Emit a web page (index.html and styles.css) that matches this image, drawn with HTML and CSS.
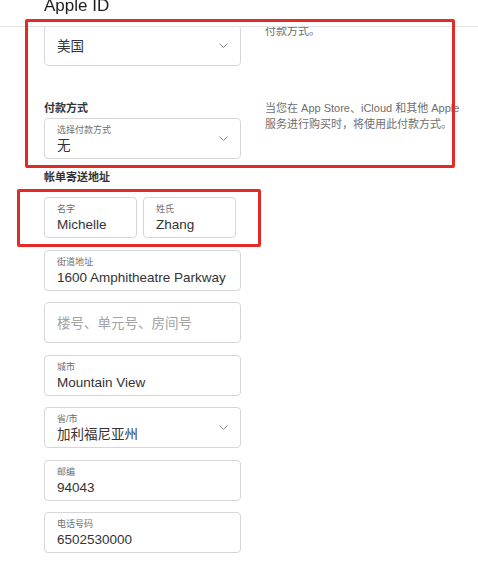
FILE: index.html
```
<!DOCTYPE html>
<html>
    <head>
        <meta charset="utf-8">
        <title>Apple ID</title>
        <meta name="viewport" content="width=device-width, initial-scale=1">
        <link rel="stylesheet" href="styles.css">
    </head>
    <body>
        <header class="topBar">
            <h1 class="title">Apple ID</h1>
        </header>

        <main class="page">
            <section class="row rowCountry">
                <div class="leftCol">
                    <div class="field">
                        <div class="fieldText">
                            <p class="fieldValue">美国</p>
                        </div>
                        <svg class="chevron" width="9" height="5" viewBox="0 0 9 5"><polyline points="0.5,0.5 4.5,4.5 8.5,0.5" /></svg>
                    </div>
                </div>
                <p class="hint">根据您所在的国家或地区，将显示不同的付款方式。</p>
            </section>

            <section class="row rowPay">
                <div class="leftCol">
                    <p class="groupLabel">付款方式</p>
                    <div class="field">
                        <div class="fieldText">
                            <p class="fieldLabel">选择付款方式</p>
                            <p class="fieldValue">无</p>
                        </div>
                        <svg class="chevron" width="9" height="5" viewBox="0 0 9 5"><polyline points="0.5,0.5 4.5,4.5 8.5,0.5" /></svg>
                    </div>
                </div>
                <p class="hint">当您在 App Store、iCloud 和其他 Apple 服务进行购买时，将使用此付款方式。</p>
            </section>

            <p class="groupLabel billingLabel">帐单寄送地址</p>
            <div class="fieldList">
                <div class="nameRow">
                    <div class="field">
                        <div class="fieldText">
                            <p class="fieldLabel">名字</p>
                            <p class="fieldValue">Michelle</p>
                        </div>
                    </div>
                    <div class="field">
                        <div class="fieldText">
                            <p class="fieldLabel">姓氏</p>
                            <p class="fieldValue">Zhang</p>
                        </div>
                    </div>
                </div>
                <div class="field">
                    <div class="fieldText">
                        <p class="fieldLabel">街道地址</p>
                        <p class="fieldValue">1600 Amphitheatre Parkway</p>
                    </div>
                </div>
                <div class="field">
                    <div class="fieldText">
                        <p class="fieldValue placeholder">楼号、单元号、房间号</p>
                    </div>
                </div>
                <div class="field">
                    <div class="fieldText">
                        <p class="fieldLabel">城市</p>
                        <p class="fieldValue">Mountain View</p>
                    </div>
                </div>
                <div class="field">
                    <div class="fieldText">
                        <p class="fieldLabel">省/市</p>
                        <p class="fieldValue">加利福尼亚州</p>
                    </div>
                    <svg class="chevron" width="9" height="5" viewBox="0 0 9 5"><polyline points="0.5,0.5 4.5,4.5 8.5,0.5" /></svg>
                </div>
                <div class="field">
                    <div class="fieldText">
                        <p class="fieldLabel">邮编</p>
                        <p class="fieldValue">94043</p>
                    </div>
                </div>
                <div class="field">
                    <div class="fieldText">
                        <p class="fieldLabel">电话号码</p>
                        <p class="fieldValue">6502530000</p>
                    </div>
                </div>
            </div>
        </main>

        <div class="mark markPayment"></div>
        <div class="mark markName"></div>
    </body>
</html>
```

FILE: styles.css
```
* {
    margin: 0;
    padding: 0;
    box-sizing: border-box;
}

body {
    background-color: white;
    font-family: 'Liberation Sans', 'Noto Sans CJK SC', sans-serif;
    color: #333;
    overflow: hidden;
}

.topBar {
    position: fixed;
    top: 0;
    left: 0;
    right: 0;
    height: 27px;
    padding-left: 44px;
    background-color: white;
    border-bottom: 1px solid #e3e3e3;
    z-index: 1;
}
.title {
    margin-top: -3px;
    font-size: 17px;
    line-height: 17px;
    font-weight: normal;
    color: #1d1d1f;
}

.page {
    padding: 7px 0 0 44px;
}

.row {
    display: flex;
    flex-flow: row nowrap;
    gap: 24px;
    margin-bottom: 34px;
}
.rowCountry .leftCol {
    padding-top: 18px;
}
.rowPay {
    margin-bottom: 10px;
}
.leftCol {
    width: 197px;
    display: flex;
    flex-flow: column nowrap;
    gap: 2px;
}

.groupLabel {
    font-size: 11px;
    line-height: 16px;
    font-weight: bold;
    color: #333;
}
.billingLabel {
    margin-bottom: 12px;
}

.hint {
    width: 200px;
    font-size: 11px;
    line-height: 16px;
    color: #6e6e6e;
}

.fieldList {
    width: 197px;
    display: flex;
    flex-flow: column nowrap;
    gap: 11.5px;
}
.nameRow {
    display: flex;
    flex-flow: row nowrap;
    gap: 6px;
}
.nameRow .field {
    width: 93px;
}

.field {
    height: 41px;
    padding: 0 12px;
    border: 1px solid #d6d6d6;
    border-radius: 4px;
    display: flex;
    flex-flow: row nowrap;
    justify-content: space-between;
    align-items: center;
    background-color: white;
}
.fieldText {
    padding-top: 1px;
    display: flex;
    flex-flow: column nowrap;
}
.fieldLabel {
    font-size: 9px;
    line-height: 13px;
    color: #6e6e6e;
}
.fieldValue {
    font-size: 13.5px;
    line-height: 17px;
    color: #333;
    white-space: nowrap;
}
.placeholder {
    color: #a3a3a3;
}

.chevron {
    flex-shrink: 0;
    fill: none;
    stroke: #8a8a8a;
    stroke-width: 1;
}

.mark {
    position: absolute;
    border: 3px solid #e42a26;
    border-radius: 2px;
    z-index: 2;
}
.markPayment {
    left: 25px;
    top: 19px;
    width: 430px;
    height: 149px;
}
.markName {
    left: 17px;
    top: 189px;
    width: 244px;
    height: 58px;
}
```
